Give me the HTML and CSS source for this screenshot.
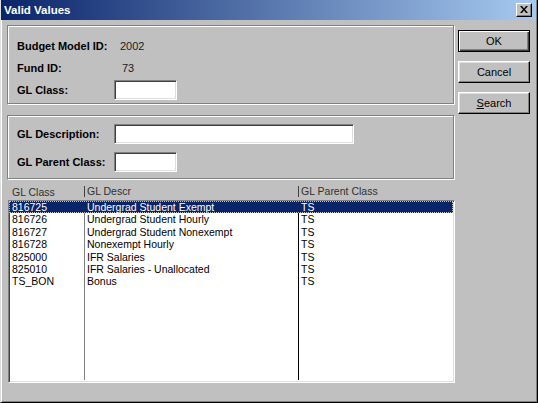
FILE: index.html
```html
<!DOCTYPE html>
<html>
<head>
<meta charset="utf-8">
<link rel="stylesheet" href="styles.css">
</head>
<body>
<div class="window">
  <div class="titlebar">
    <span class="title">Valid Values</span>
    <span class="close"><svg width="8" height="7" viewBox="0 0 8 7"><path d="M0 0h2l2 2.5L6 0h2L5 3.5 8 7H6L4 4.5 2 7H0l3-3.5z" fill="#000"/></svg></span>
  </div>
  <div class="content">
    <div class="left">
      <div class="group g1">
        <div class="frow"><span class="lbl">Budget Model ID:</span><span class="val">2002</span></div>
        <div class="frow"><span class="lbl">Fund ID:</span><span class="val v2">73</span></div>
        <div class="frow"><span class="lbl">GL Class:</span><span class="input short"></span></div>
      </div>
      <div class="group g2">
        <div class="frow"><span class="lbl">GL Description:</span><span class="input long"></span></div>
        <div class="frow"><span class="lbl">GL Parent Class:</span><span class="input short"></span></div>
      </div>
      <div class="lhead">
        <span class="hc c1">GL Class</span>
        <span class="hc c2">GL Descr</span>
        <span class="hc c3">GL Parent Class</span>
      </div>
      <div class="list">
        <div class="cols">
          <div class="col c1"></div>
          <div class="col c2"></div>
          <div class="col c3"></div>
        </div>
        <div class="rows">
          <div class="row sel"><span class="c1">816725</span><span class="c2">Undergrad Student Exempt</span><span class="c3">TS</span></div>
          <div class="row"><span class="c1">816726</span><span class="c2">Undergrad Student Hourly</span><span class="c3">TS</span></div>
          <div class="row"><span class="c1">816727</span><span class="c2">Undergrad Student Nonexempt</span><span class="c3">TS</span></div>
          <div class="row"><span class="c1">816728</span><span class="c2">Nonexempt Hourly</span><span class="c3">TS</span></div>
          <div class="row"><span class="c1">825000</span><span class="c2">IFR Salaries</span><span class="c3">TS</span></div>
          <div class="row"><span class="c1">825010</span><span class="c2">IFR Salaries - Unallocated</span><span class="c3">TS</span></div>
          <div class="row"><span class="c1">TS_BON</span><span class="c2">Bonus</span><span class="c3">TS</span></div>
        </div>
      </div>
    </div>
    <div class="buttons">
      <div class="btn default"><span>OK</span></div>
      <div class="btn"><span>Cancel</span></div>
      <div class="btn"><span><u>S</u>earch</span></div>
    </div>
  </div>
</div>
</body>
</html>
```

FILE: styles.css
```css
* { box-sizing: border-box; }
html, body { margin: 0; padding: 0; background: #c0c0c0; }
body { font-family: "Liberation Sans", Arial, sans-serif; font-size: 11px; color: #000; }

.window {
  width: 538px;
  height: 403px;
  background: #c0c0c0;
  border-left: 1px solid #dfdfdf;
  border-right: 1px solid #000;
  border-bottom: 1px solid #000;
  box-shadow: inset 1px 0 0 #fff, inset -1px -1px 0 #808080;
  display: flex;
  flex-direction: column;
  position: relative;
}

.titlebar {
  height: 20px;
  margin: 0 1px 0 0;
  background: linear-gradient(to right, #0a246a, #a6caf0);
  display: flex;
  align-items: center;
  justify-content: space-between;
  padding: 0 4px 0 3px;
}
.title { color: #fff; font-weight: bold; font-size: 11.5px; }
.close {
  width: 16px;
  height: 14px;
  background: #c0c0c0;
  border-top: 1px solid #fff;
  border-left: 1px solid #fff;
  border-right: 1px solid #000;
  border-bottom: 1px solid #000;
  box-shadow: inset -1px -1px 0 #808080;
  display: flex;
  align-items: center;
  justify-content: center;
  padding-bottom: 1px;
}

.content {
  display: flex;
  padding: 5px 0 0 6px;
  gap: 4px;
}
.left { width: 447px; display: flex; flex-direction: column; }

.group {
  border: 1px solid #808080;
  box-shadow: inset 1px 1px 0 #fff, 1px 1px 0 #fff;
  padding-left: 9px;
}
.g1 { height: 79px; padding-top: 9px; }
.g2 { height: 64px; margin-top: 11px; padding-top: 8px; display: flex; flex-direction: column; gap: 8px; }

.frow { display: flex; align-items: center; height: 22px; }
.g2 .frow { height: 20px; }
.lbl { font-weight: bold; width: 97px; flex: none; }
.val { padding-left: 6px; color: #202020; }
.v2 { padding-left: 8px; }

.input {
  display: block;
  height: 20px;
  background: #fff;
  border-top: 1px solid #808080;
  border-left: 1px solid #808080;
  border-right: 1px solid #fff;
  border-bottom: 1px solid #fff;
  box-shadow: inset 1px 1px 0 #404040, inset -1px -1px 0 #dfdfdf;
}
.input.short { width: 63px; }
.input.long { width: 240px; }

.lhead {
  display: flex;
  height: 19px;
  align-items: center;
  margin-top: 2px;
  color: #303030;
  font-size: 10.5px;
  padding-top: 2px;
}
.hc.c1 { width: 77px; padding-left: 5px; }
.hc.c2 { width: 214px; border-left: 1px solid #404040; padding-left: 2px; line-height: 11px; }
.hc.c3 { border-left: 1px solid #404040; padding-left: 2px; line-height: 11px; }

.list {
  margin-left: 1px;
  width: 447px;
  height: 183px;
  background: #fff;
  border-top: 1px solid #808080;
  border-left: 1px solid #808080;
  border-right: 1px solid #fff;
  border-bottom: 1px solid #fff;
  box-shadow: inset 1px 1px 0 #404040, inset -1px -1px 0 #dfdfdf;
  position: relative;
  font-size: 10.5px;
}
.cols { position: absolute; inset: 2px 2px 2px 2px; display: flex; }
.col.c1 { width: 74px; border-right: 1px solid #808080; }
.col.c2 { width: 214px; border-right: 1px solid #000; }
.rows { position: relative; padding: 0 1px 0 0; }
.row { display: flex; height: 12.4px; line-height: 12px; }
.row .c1 { width: 75px; padding-left: 3px; }
.row .c2 { width: 214px; padding-left: 3px; }
.row .c3 { padding-left: 3px; }
.row.sel { background: #0a246a; color: #fff; outline: 1px dotted #c0c0c0; outline-offset: -1px; }

.buttons { display: flex; flex-direction: column; gap: 9px; padding-top: 5px; }
.btn {
  width: 72px;
  height: 22px;
  background: #c0c0c0;
  border-top: 1px solid #fff;
  border-left: 1px solid #fff;
  border-right: 1px solid #000;
  border-bottom: 1px solid #000;
  box-shadow: inset -1px -1px 0 #808080, inset 1px 1px 0 #dfdfdf;
  display: flex;
  align-items: center;
  justify-content: center;
  font-size: 11px;
}
.btn.default {
  border: 1px solid #000;
  box-shadow: inset 1px 1px 0 #fff, inset -1px -1px 0 #404040, inset -2px -2px 0 #808080;
}
```
